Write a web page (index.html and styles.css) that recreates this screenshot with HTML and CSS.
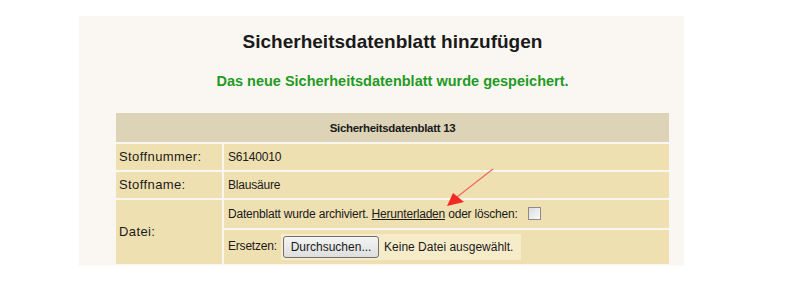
FILE: index.html
```html
<!DOCTYPE html>
<html lang="de">

<head>
    <meta charset="UTF-8">
    <meta name="viewport" content="width=device-width, initial-scale=1.0">
    <title>Sicherheitsdatenblatt hinzufügen</title>
    <link rel="stylesheet" href="styles.css">
</head>

<body>
    <div class="panel">
        <h1 class="title">Sicherheitsdatenblatt hinzufügen</h1>
        <p class="notice">Das neue Sicherheitsdatenblatt wurde gespeichert.</p>

        <table class="sheet">
            <tr>
                <th colspan="2">Sicherheitsdatenblatt 13</th>
            </tr>
            <tr>
                <td class="label">Stoffnummer:</td>
                <td>S6140010</td>
            </tr>
            <tr>
                <td class="label">Stoffname:</td>
                <td>Blausäure</td>
            </tr>
            <tr class="file-row">
                <td class="label" rowspan="2">Datei:</td>
                <td>Datenblatt wurde archiviert. <a href="#">Herunterladen</a> oder löschen: <span class="check"></span></td>
            </tr>
            <tr class="upload-row">
                <td>Ersetzen: <span class="file"><span class="browse">Durchsuchen...</span> Keine Datei ausgewählt.</span></td>
            </tr>
        </table>

        <svg class="arrow" width="60" height="45" viewBox="0 0 60 45">
            <line x1="53" y1="4" x2="17" y2="32" stroke="#f06a5a" stroke-width="1.2" />
            <polygon points="7,41 13,28 24,37" fill="#f22a22" />
        </svg>
    </div>
</body>

</html>
```

FILE: styles.css
```css
* {
    margin: 0;
    padding: 0;
}

body {
    font-family: "Liberation Sans", Arial, sans-serif;
    color: #1a1a1a;
    background: #fff;
}

.panel {
    position: relative;
    width: 605px;
    margin: 16px 0 0 79px;
    padding: 14px 13px 0 35px;
    box-sizing: border-box;
    background: #faf7f3;
    text-align: center;
}

.title {
    font-size: 19px;
    line-height: 23px;
    font-weight: bold;
}

.notice {
    margin-top: 19px;
    font-size: 14.5px;
    line-height: 18px;
    font-weight: bold;
    color: #1f9a22;
}

.sheet {
    margin-top: 21px;
    width: 557px;
    border-collapse: separate;
    border-spacing: 2px;
    font-size: 12px;
    line-height: 14px;
    letter-spacing: -0.2px;
    text-align: left;
}

.sheet th {
    height: 29px;
    padding: 0;
    background: #ddd4b8;
    font-size: 11.5px;
    letter-spacing: -0.3px;
    text-align: center;
}

.sheet td {
    height: 26px;
    padding: 0 4px;
    background: #efe0b1;
    box-sizing: border-box;
}

.sheet .label {
    width: 106px;
    padding-left: 3px;
    font-size: 13px;
    letter-spacing: 0.4px;
}

.sheet a {
    color: #1a1a1a;
}

.file-row td {
    height: 28px;
}

.upload-row td {
    height: 34px;
}

.check {
    display: inline-block;
    width: 11px;
    height: 11px;
    margin-left: 7px;
    vertical-align: -2px;
    border: 1px solid #8c8c8c;
    background: linear-gradient(135deg, #dcdcdc, #fbfbfb);
}

.file {
    display: inline-flex;
    align-items: center;
    height: 26px;
    padding: 0 8px 0 2px;
    margin-left: 1px;
    vertical-align: middle;
    background: #f7ecca;
    letter-spacing: 0;
}

.browse {
    display: inline-block;
    width: 96px;
    height: 22px;
    line-height: 20px;
    margin-right: 5px;
    box-sizing: border-box;
    border: 1px solid #707070;
    border-radius: 3px;
    background: linear-gradient(#f4f4f4, #dedede);
    text-align: center;
}

.arrow {
    position: absolute;
    left: 361px;
    top: 149px;
}
```
